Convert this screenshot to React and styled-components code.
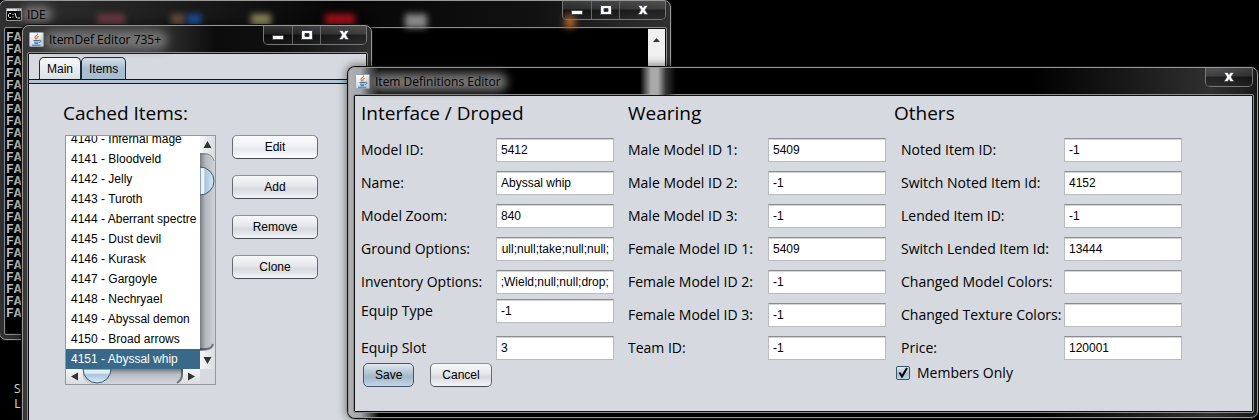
import React, { useEffect, useRef, useState } from 'react';
import styled, { createGlobalStyle, css } from 'styled-components';

const GlobalStyle = createGlobalStyle`
  * {
    box-sizing: border-box;
  }

  body {
    margin: 0;
    background: #000;
    font-family: "Liberation Sans", Arial, sans-serif;
    font-size: 12px;
    color: #000;
  }
`

const comic = '"Comic Sans MS", "Open Sans", "Noto Sans", sans-serif';
const segoe = '"Segoe UI", "Open Sans", "Noto Sans", sans-serif';
const panel = '#d6d9df';

const Desktop = styled.div`
  position: relative;
  min-height: 100vh;
  overflow: hidden;
  background: #000;
`

const Shortcut = styled.div`
  position: absolute;
  left: 14px;
  top: 381px;
  font: 12px/15px ${segoe};
  text-align: right;
  color: #eee;
`

const Frame = styled.section`
  position: absolute;
  display: flex;
  flex-direction: column;
  padding: 0 4px 5px 5px;
  border: 1px solid #999;
  border-radius: 7px;
  box-shadow: 0 0 0 1px #111, 0 0 8px 2px rgba(0, 0, 0, 0.5);
`

const ConsoleFrame = styled(Frame)`
  left: -1px;
  top: 0;
  width: 672px;
  height: 340px;
  background: linear-gradient(90deg, #303030, #222 20%, #060606 50%, #111 80%, #303030);
`

const EditorFrame = styled(Frame)`
  left: 22px;
  top: 25px;
  bottom: -8px;
  background: linear-gradient(90deg, #383838, #3c3c3c 35%, #0c0c0c 55%, #101010 75%, #303030);
`

const DialogFrame = styled(Frame)`
  left: 348px;
  right: 1px;
  top: 67px;
  background: linear-gradient(90deg, #aeb0b4, #a4a6aa 12px, #000 30px, #000 75%, #171717 85%, #303030 95%, #191919);
`

const TitleBar = styled.header`
  position: relative;
  display: flex;
  justify-content: space-between;
  height: 27px;
  padding-left: 1px;

  ${props => props.$streak && css`
    background: linear-gradient(90deg, transparent 286px, #aaa 297px, #aaa 304px, #333 312px, transparent 322px);
  `}
`

const Title = styled.h1`
  position: relative;
  display: flex;
  align-items: center;
  gap: 5px;
  margin: 0;
  font: 12px/26px ${segoe};

  &::before {
    content: "";
    position: absolute;
    top: 5px;
    right: -6px;
    bottom: 4px;
    left: 16px;
    border-radius: 8px;
    background: #757575;
    filter: blur(5px);
  }
`

const TitleText = styled.span`
  position: relative;
`

/* light that shines through the glass from the shortcuts underneath */
const Glow = styled.span`
  position: absolute;
  left: ${props => props.$left}px;
  bottom: 0;
  width: ${props => props.$width}px;
  height: 14px;
  background: ${props => props.$color};
  filter: blur(3px);
`

const Controls = styled.div`
  position: relative;
  display: flex;
  height: 19px;
  border: 1px solid #777;
  border-top: 0;
  border-radius: 0 0 5px 5px;
`

const ControlButton = styled.button`
  display: flex;
  align-items: center;
  justify-content: center;
  width: ${props => (props.$wide ? 46 : 28)}px;
  padding: 0;
  border: 0;
  border-left: 1px solid #666;
  background: linear-gradient(rgba(255, 255, 255, 0.16), rgba(255, 255, 255, 0.08) 45%, rgba(0, 0, 0, 0.3) 50%, rgba(40, 40, 40, 0.3));

  &:first-child {
    border-left: 0;
  }
`

const Body = styled.div`
  flex: 1;
  border: 1px solid #111;
  outline: 1px solid #8c8c8c;
  border-radius: 1px;
  background: ${props => (props.$dark ? '#000' : panel)};
`

const Console = styled(Body)`
  display: flex;
  justify-content: space-between;
  overflow: hidden;
`

const Output = styled.pre`
  margin: 0;
  padding-top: 3px;
  font: bold 13px/12px "Liberation Mono", monospace;
  color: #c0c0c0;
`

const ConsoleScroll = styled.div`
  width: 17px;
  padding-top: 2px;
  background: #f0f0f0;
  text-align: center;
`

const Tabs = styled.nav`
  display: flex;
  height: 26px;
  padding: 3px 10px 0;
  border-bottom: 1px solid #0c1420;
`

const Tab = styled.button`
  padding: 0 7px;
  border: 1px solid #1f2a38;
  border-bottom: 0;
  border-radius: 5px 5px 0 0;
  font: 12px "Liberation Sans", Arial, sans-serif;
  background: ${props => (props.$active
    ? 'linear-gradient(#d5dfe8, #a9bed0 50%, #a9bed0)'
    : 'linear-gradient(#f7f8fa, #dcdfe4)')};
`

const TabLine = styled.div`
  height: 4px;
  background: #b2c5d7;
  border-bottom: 1px solid #0c1420;
`

const Cached = styled.div`
  padding: 17px 48px 0 34px;
`

const Heading = styled.h2`
  margin: 0;
  font: 19px/24px ${comic};
`

const ListRow = styled.div`
  display: flex;
  align-items: flex-start;
  gap: 16px;
  padding: 10px 0 0 2px;
`

const ScrollPane = styled.div`
  display: grid;
  grid-template-columns: 134px 15px;
  grid-template-rows: 233px 15px;
  border: 1px solid #92979f;
`

const List = styled.ul`
  display: flex;
  flex-direction: column;
  justify-content: flex-end;
  margin: 0;
  padding: 0;
  overflow: hidden;
  list-style: none;
  background: #fff;
`

const Item = styled.li`
  flex: none;
  padding-left: 5px;
  line-height: 20px;
  white-space: nowrap;
  cursor: default;

  ${props => props.$selected && css`
    background: #39698a;
    color: #fff;
  `}
`

const Actions = styled.div`
  display: flex;
  flex-direction: column;
  gap: 16px;
  width: 86px;
`

const Button = styled.button`
  height: 24px;
  padding: 0 11px;
  border: 1px solid #666b73;
  border-top-color: #8d9299;
  border-bottom-color: #454a52;
  border-radius: 5px;
  font: 12px "Liberation Sans", Arial, sans-serif;
  background: linear-gradient(#f8f9fa, #e4e6ea 45%, #d6d9df 60%, #f3f5f8);

  ${props => props.$bright && css`
    background: linear-gradient(#fdfdfe, #eff1f4 45%, #e6e9ee 60%, #fff);
  `}

  ${props => props.$primary && css`
    border-color: #41586c;
    background: linear-gradient(#e0e8ee, #a9bdcd 50%, #a3b8c9 60%, #c3d7e8);
  `}
`

const Form = styled.form`
  padding: 5px 6px 24px;
`

const Columns = styled.div`
  display: flex;
  align-items: flex-start;
`

const Column = styled.section`
  margin-right: ${props => props.$gap || 0}px;
`

const Fields = styled.div`
  display: grid;
  grid-template-columns: ${props => props.$label}px 118px;
  grid-template-rows: ${props => props.$rows || 'repeat(6, 33px) 24px'};
  padding: 13px 0 3px ${props => props.$indent || 0}px;
`

const Label = styled.label`
  font: 14px/24px ${comic};
  white-space: nowrap;
`

const Input = styled.input`
  width: 100%;
  height: 24px;
  padding: 0 4px;
  border: 1px solid #b8bbc0;
  border-top-color: #8b8d92;
  border-radius: 0;
  outline: 0;
  font: 12px "Liberation Sans", Arial, sans-serif;
  background: #fff;
  box-shadow: inset 0 1px #d5d5d5;
`

const Footer = styled.div`
  display: flex;
  gap: 16px;
  padding-left: 2px;
`

const CheckLabel = styled.label`
  display: flex;
  align-items: center;
  gap: 7px;
  padding-left: 2px;
  font: 14px/20px ${comic};
`

const CheckBox = styled.span`
  display: grid;

  & > * {
    grid-area: 1 / 1;
  }

  input {
    appearance: none;
    width: 14px;
    height: 14px;
    margin: 0;
    border: 1px solid #3b5368;
    border-radius: 2px;
    background: linear-gradient(#e3ebf1, #a9bfd0 55%, #c0d4e4);
  }

  svg {
    z-index: 1;
    pointer-events: none;
  }

  input:not(:checked) + svg {
    visibility: hidden;
  }
`

const JavaIcon = () => (
  <svg width="15" height="15" viewBox="0 0 15 15" fill="none">
    <defs>
      <linearGradient id="java" x2="0" y2="1">
        <stop stopColor="#fff" />
        <stop offset="1" stopColor="#c9d9e8" />
      </linearGradient>
    </defs>
    <rect x=".5" y=".5" width="14" height="14" rx="1" fill="url(#java)" stroke="#8aa5be" />
    <path d="M8.500 1.500c1 2-3.500 2.500-2.500 4.300.3.700 1 1 1.200 1.700M9.800 4.200c-1.500.7-2.800 1.300-1.400 3" stroke="#e87b28" strokeWidth="1.200" />
    <path d="M4.500 8.500h5.500M5 10.200h4.500M5.500 11.700h3.500M3 13.200h8.500" stroke="#446f97" />
    <path d="M10 8.300c2.500-.7 2.500 1.800 0 2.200" stroke="#446f97" />
  </svg>
)

const ConsoleIcon = () => (
  <svg width="16" height="13" viewBox="0 0 16 13" fill="none">
    <path d="M.5.5h15v12H.5z" fill="#000" stroke="#999" />
    <path d="M1 1h14v2H1z" fill="#dfe6f0" />
    <path d="M11 2h1M13 2h1" stroke="#3460b0" />
    <path d="M5 5.500H3.500L2.500 6.500v2l1 1H5M7 6v1M7 8.500v1M9 5l1.500 5M11.500 10H14" stroke="#fff" />
  </svg>
)

const MinimizeIcon = () => (
  <svg width="12" height="12" viewBox="0 0 12 12">
    <rect x=".5" y="6.500" width="11" height="4" rx="1" fill="#fff" stroke="#434752" />
  </svg>
)

const MaximizeIcon = () => (
  <svg width="12" height="12" viewBox="0 0 12 12">
    <path fillRule="evenodd" d="M.5 1.500h11v9H.5zM4 4.500h4v3H4z" fill="#fff" stroke="#434752" />
  </svg>
)

const CloseIcon = () => (
  <svg width="12" height="12" viewBox="0 0 12 12">
    <path d="M1 1.500h3.500L6 3.500l1.500-2H11L8 6l3 4.500H7.500L6 8.500l-1.500 2H1L4 6z" fill="#fff" stroke="#434752" strokeWidth=".8" />
  </svg>
)

const WindowControls = ({ closeOnly }) => (
  <Controls>
    {!closeOnly && <ControlButton type="button" aria-label="Minimize"><MinimizeIcon /></ControlButton>}
    {!closeOnly && <ControlButton type="button" aria-label="Maximize"><MaximizeIcon /></ControlButton>}
    <ControlButton type="button" aria-label="Close" $wide><CloseIcon /></ControlButton>
  </Controls>
)

const VerticalBar = () => (
  <svg width="15" height="233" viewBox="0 0 15 233">
    <defs>
      <linearGradient id="trackV">
        <stop stopColor="#777b82" />
        <stop offset=".35" stopColor="#b4b7bd" />
        <stop offset="1" stopColor="#d0d3d9" />
      </linearGradient>
      <linearGradient id="thumbV">
        <stop stopColor="#dceaf5" />
        <stop offset=".25" stopColor="#eef6fc" />
        <stop offset=".35" stopColor="#a9c4da" />
        <stop offset="1" stopColor="#d6ebf8" />
      </linearGradient>
      <linearGradient id="arrowV">
        <stop stopColor="#f5f6f8" />
        <stop offset="1" stopColor="#d9dce1" />
      </linearGradient>
    </defs>
    <path d="M0 0h15v233H0z" fill="url(#trackV)" />
    <path d="M0 0h15v26c-1-5-5-9-9-9H0z" fill="url(#arrowV)" />
    <path d="M0 18h6c4 0 7 3 8 7" stroke="#555" strokeOpacity=".5" fill="none" />
    <path d="M0 233h15v-25c-1 4-4 6-9 7H0z" fill="url(#arrowV)" />
    <path d="M0 213h6c3 0 6-2 7-5" stroke="#333" strokeWidth="2" strokeOpacity=".6" fill="none" />
    <path d="M0 31a14 14 0 0 1 0 28z" fill="url(#thumbV)" stroke="#39566f" />
    <path d="M7.500 5l4 7h-8zM7.500 228l4-7h-8z" fill="#333" />
  </svg>
)

const HorizontalBar = () => (
  <svg width="134" height="15" viewBox="0 0 134 15">
    <defs>
      <linearGradient id="trackH" x2="0" y2="1">
        <stop stopColor="#777b82" />
        <stop offset=".35" stopColor="#b9bcc2" />
        <stop offset="1" stopColor="#d3d6dc" />
      </linearGradient>
      <linearGradient id="thumbH" x2="0" y2="1">
        <stop stopColor="#e9f1f8" />
        <stop offset=".3" stopColor="#dce9f3" />
        <stop offset=".4" stopColor="#aac4d9" />
        <stop offset="1" stopColor="#dbeffb" />
      </linearGradient>
      <linearGradient id="arrowH" x2="0" y2="1">
        <stop stopColor="#f5f6f8" />
        <stop offset="1" stopColor="#d9dce1" />
      </linearGradient>
    </defs>
    <path d="M0 0h134v15H0z" fill="url(#trackH)" />
    <path d="M0 0h17v6c0 4 3 8 8 9H0zM134 0h-17v6c0 4-3 8-8 9h25z" fill="url(#arrowH)" />
    <path d="M116 0v6c0 3-2 6-5 8" stroke="#333" strokeWidth="2" strokeOpacity=".6" fill="none" />
    <path d="M17 0a14 14 0 0 0 28 0z" fill="url(#thumbH)" stroke="#39566f" />
    <path d="M5 7.500l7-4v8zM129 7.500l-7-4v8z" fill="#333" />
  </svg>
)

const items = [
  '4140 - Infernal mage',
  '4141 - Bloodveld',
  '4142 - Jelly',
  '4143 - Turoth',
  '4144 - Aberrant spectre',
  '4145 - Dust devil',
  '4146 - Kurask',
  '4147 - Gargoyle',
  '4148 - Nechryael',
  '4149 - Abyssal demon',
  '4150 - Broad arrows',
  '4151 - Abyssal whip'
];

const interfaceFields = [
  ['Model ID:', '5412'],
  ['Name:', 'Abyssal whip'],
  ['Model Zoom:', '840'],
  ['Ground Options:', 'null;null;take;null;null;'],
  ['Inventory Options:', 'null;Wield;null;null;drop;'],
  ['Equip Type', '-1'],
  ['Equip Slot', '3']
];

const wearingFields = [
  ['Male Model ID 1:', '5409'],
  ['Male Model ID 2:', '-1'],
  ['Male Model ID 3:', '-1'],
  ['Female Model ID 1:', '5409'],
  ['Female Model ID 2:', '-1'],
  ['Female Model ID 3:', '-1'],
  ['Team ID:', '-1']
];

const otherFields = [
  ['Noted Item ID:', '-1'],
  ['Switch Noted Item Id:', '4152'],
  ['Lended Item ID:', '-1'],
  ['Switch Lended Item Id:', '13444'],
  ['Changed Model Colors:', ''],
  ['Changed Texture Colors:', ''],
  ['Price:', '120001']
];

const Field = ({ label, value }) => {
  const input = useRef(null);
  const id = label.toLowerCase().replace(/\W+/g, '-');

  // long values show their end, where the caret is
  useEffect(() => {
    input.current.scrollLeft = input.current.scrollWidth;
  }, []);

  return (
    <>
      <Label htmlFor={id}>{label}</Label>
      <Input id={id} ref={input} defaultValue={value} />
    </>
  )
}

const FieldList = ({ fields, ...rest }) => (
  <Fields {...rest}>
    {fields.map(([label, value]) => <Field key={label} label={label} value={value} />)}
  </Fields>
)

const ConsoleWindow = () => (
  <ConsoleFrame>
    <TitleBar>
      <Glow $left={92} $width={28} $color="#6b3a42" />
      <Glow $left={166} $width={14} $color="#67503c" />
      <Glow $left={182} $width={14} $color="#1d4f9c" />
      <Glow $left={246} $width={20} $color="#8f875e" />
      <Glow $left={320} $width={30} $color="#a5111b" />
      <Glow $left={400} $width={22} $color="#8a8a8a" />
      <Glow $left={560} $width={10} $color="#a5652b" />
      <Title><ConsoleIcon /><TitleText>IDE</TitleText></Title>
      <WindowControls />
    </TitleBar>
    <Console $dark>
      <Output>{Array(24).fill('FA').join('\n')}</Output>
      <ConsoleScroll>
        <svg width="7" height="4" viewBox="0 0 7 4"><path d="M3.500 0L7 4H0z" fill="#333" /></svg>
      </ConsoleScroll>
    </Console>
  </ConsoleFrame>
)

const EditorWindow = () => {
  const [selected, setSelected] = useState('4151 - Abyssal whip');

  return (
    <EditorFrame>
      <TitleBar>
        <Title><JavaIcon /><TitleText>ItemDef Editor 735+</TitleText></Title>
        <WindowControls />
      </TitleBar>
      <Body>
        <Tabs>
          <Tab type="button">Main</Tab>
          <Tab type="button" $active>Items</Tab>
        </Tabs>
        <TabLine />
        <Cached>
          <Heading>Cached Items:</Heading>
          <ListRow>
            <ScrollPane>
              <List role="listbox" aria-label="Cached Items">
                {items.map(item => (
                  <Item
                    key={item}
                    role="option"
                    aria-selected={item === selected}
                    $selected={item === selected}
                    onClick={() => setSelected(item)}
                  >
                    {item}
                  </Item>
                ))}
              </List>
              <VerticalBar />
              <HorizontalBar />
            </ScrollPane>
            <Actions>
              <Button type="button" $bright>Edit</Button>
              <Button type="button">Add</Button>
              <Button type="button">Remove</Button>
              <Button type="button">Clone</Button>
            </Actions>
          </ListRow>
        </Cached>
      </Body>
    </EditorFrame>
  )
}

const DialogWindow = () => (
  <DialogFrame>
    <TitleBar $streak>
      <Title><JavaIcon /><TitleText>Item Definitions Editor</TitleText></Title>
      <WindowControls closeOnly />
    </TitleBar>
    <Body>
      <Form onSubmit={e => e.preventDefault()}>
        <Columns>
          <Column $gap={14}>
            <Heading>Interface / Droped</Heading>
            <FieldList fields={interfaceFields} $label={135} $rows="repeat(4, 33px) 29px 37px 24px" />
            <Footer>
              <Button type="submit" $primary>Save</Button>
              <Button type="button">Cancel</Button>
            </Footer>
          </Column>
          <Column $gap={8}>
            <Heading>Wearing</Heading>
            <FieldList fields={wearingFields} $label={140} />
          </Column>
          <Column>
            <Heading>Others</Heading>
            <FieldList fields={otherFields} $label={163} $indent={7} />
            <CheckLabel>
              <CheckBox>
                <input type="checkbox" defaultChecked />
                <svg width="14" height="14" viewBox="0 0 14 14">
                  <path d="M3.500 6.500l2.500 4 5-8.500" fill="none" stroke="#000" strokeWidth="2" />
                </svg>
              </CheckBox>
              Members Only
            </CheckLabel>
          </Column>
        </Columns>
      </Form>
    </Body>
  </DialogFrame>
)

const App = () => (
  <>
    <GlobalStyle />
    <Desktop>
      <Shortcut>S<br />L</Shortcut>
      <ConsoleWindow />
      <EditorWindow />
      <DialogWindow />
    </Desktop>
  </>
)

export default App;
